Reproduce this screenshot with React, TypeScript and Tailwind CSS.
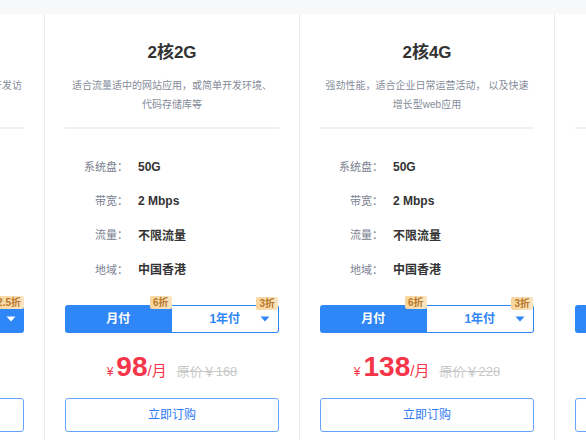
import { Fragment } from 'react'

type Plan = {
  title: string
  desc: string[]
  specs: { label: string; value: string }[]
  price: string
  origin: string
  leftBadge: string
  rightBadge: string
  yearly: boolean
}

const specs = [
  { label: '系统盘：', value: '50G' },
  { label: '带宽：', value: '2 Mbps' },
  { label: '流量：', value: '不限流量' },
  { label: '地域：', value: '中国香港' },
]

const plans: Plan[] = [
  {
    title: '1核1G',
    desc: ['适合个人站长、博客网站、小程序等轻量开发访', '问量较小的应用场景'],
    specs,
    price: '58',
    origin: '￥98',
    leftBadge: '6折',
    rightBadge: '2.5折',
    yearly: true,
  },
  {
    title: '2核2G',
    desc: ['适合流量适中的网站应用，或简单开发环境、', '代码存储库等'],
    specs,
    price: '98',
    origin: '￥168',
    leftBadge: '6折',
    rightBadge: '3折',
    yearly: false,
  },
  {
    title: '2核4G',
    desc: ['强劲性能，适合企业日常运营活动， 以及快速', '增长型web应用'],
    specs,
    price: '138',
    origin: '￥228',
    leftBadge: '6折',
    rightBadge: '3折',
    yearly: false,
  },
  {
    title: '4核8G',
    desc: ['满足大型企业高并发访问，数据处理等业务', '需求的应用场景'],
    specs,
    price: '268',
    origin: '￥448',
    leftBadge: '6折',
    rightBadge: '3折',
    yearly: false,
  },
]

const Caret = ({ white }: { white: boolean }) => (
  <svg className="absolute right-[8px] top-1/2 -translate-y-1/2" width="10" height="6" viewBox="0 0 10 6">
    <path d="M0.5 0.5h9L5 5.5z" fill={white ? '#ffffff' : '#2f86f6'} />
  </svg>
)

const Badge = ({ text }: { text: string }) => (
  <span className="absolute right-0 top-[-9px] px-[3px] h-[13px] leading-[13px] text-[10px] text-[#b8782c] bg-gradient-to-r from-[#f6d49b] to-[#fbe5bf] rounded-[2px]">
    {text}
  </span>
)

const PlanCard = ({ plan }: { plan: Plan }) => (
  <div className="w-[254px] shrink-0 bg-white px-5 pt-[27px] pb-10">
    <h3 className="text-center text-[17px] leading-[24px] font-bold text-[#333]">{plan.title}</h3>
    <p className="mt-[11px] text-center text-[10px] leading-[19px] text-[#858c9a] whitespace-nowrap">
      {plan.desc.map((line, i) => (
        <Fragment key={i}>
          {i > 0 && <br />}
          {line}
        </Fragment>
      ))}
    </p>
    <div className="mt-[13px] h-[2px] bg-[#f0f0f0]" />

    <div className="mt-[21px]">
      {plan.specs.map((s) => (
        <div key={s.label} className="flex items-center h-[34.3px]">
          <span className="w-[63px] text-right text-[11px] text-[#7b8191]">{s.label}</span>
          <span className="ml-[10px] text-[12px] font-bold text-[#333]">{s.value}</span>
        </div>
      ))}
    </div>

    <div className="mt-[18px] flex h-[28px]">
      <div
        className={`relative flex-1 flex items-center justify-center rounded-l-[3px] text-[12px] font-bold ${
          plan.yearly ? 'border border-r-0 border-[#2f86f6] bg-white text-[#2f86f6]' : 'bg-[#2f86f6] text-white'
        }`}
      >
        月付
        <Badge text={plan.leftBadge} />
      </div>
      <div
        className={`relative flex-1 flex items-center justify-center rounded-r-[3px] text-[12px] font-bold ${
          plan.yearly ? 'bg-[#2f86f6] text-white' : 'border border-l-0 border-[#2f86f6] bg-white text-[#2f86f6]'
        }`}
      >
        1年付
        <Caret white={plan.yearly} />
        <Badge text={plan.rightBadge} />
      </div>
    </div>

    <div className="mt-[16px] h-[36px] flex items-baseline justify-center text-[#f5364a]">
      <span className="text-[12px]">¥</span>
      <span className="ml-[3px] text-[28px] leading-[36px] font-bold">{plan.price}</span>
      <span className="text-[15px]">/月</span>
      <span className="ml-[10px] text-[13px] text-[#c8c8c8] line-through">原价{plan.origin}</span>
    </div>

    <button className="mt-[13px] w-full h-[34px] rounded-[3px] border border-[#67a5fa] bg-white text-[12px] text-[#2f7bf5]">
      立即订购
    </button>
  </div>
)

export default function App() {
  return (
    <div
      className="w-[586px] h-[440px] overflow-hidden bg-[#f7f8fa] pt-[14px]"
      style={{ fontFamily: '"Liberation Sans", "Noto Sans CJK SC", sans-serif' }}
    >
      <div className="ml-[-210px] flex gap-px bg-[#ebebeb] w-max">
        {plans.map((p) => (
          <PlanCard key={p.title} plan={p} />
        ))}
      </div>
    </div>
  )
}
